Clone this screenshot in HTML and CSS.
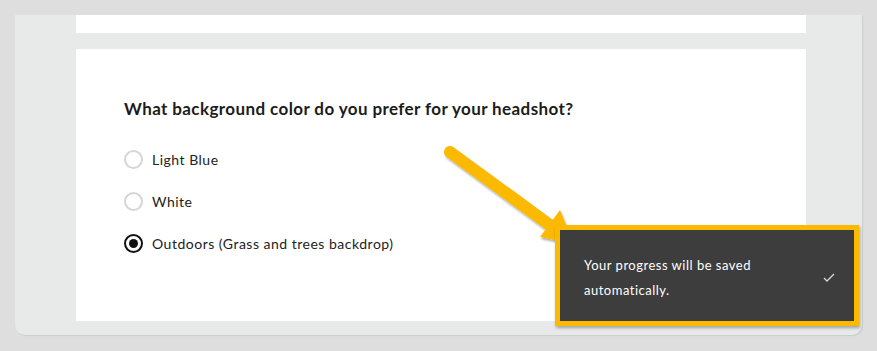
FILE: index.html
```html
<!DOCTYPE html>
<html lang="en">
<head>
    <meta charset="UTF-8">
    <meta name="viewport" content="width=device-width, initial-scale=1.0">
    <title>Headshot Survey</title>
    <link rel="stylesheet" href="styles.css">
</head>
<body>
    <div class="panel">
        <!-- Previous question (scrolled out) -->
        <div class="card card-top"></div>

        <!-- Question Card -->
        <div class="card card-question">
            <h2>What background color do you prefer for your headshot?</h2>
            <label class="option">
                <span class="radio"></span>
                <span>Light Blue</span>
            </label>
            <label class="option">
                <span class="radio"></span>
                <span>White</span>
            </label>
            <label class="option">
                <span class="radio checked"></span>
                <span>Outdoors (Grass and trees backdrop)</span>
            </label>
        </div>
    </div>

    <!-- Callout arrow -->
    <svg class="arrow" width="160" height="120" viewBox="0 0 160 120">
        <defs>
            <filter id="shade" x="-20%" y="-20%" width="140%" height="140%">
                <feDropShadow dx="1" dy="2" stdDeviation="1.2" flood-color="#000" flood-opacity="0.35"/>
            </filter>
        </defs>
        <g filter="url(#shade)">
            <line x1="10" y1="12" x2="118" y2="91" stroke="#fbb900" stroke-width="12" stroke-linecap="round"/>
            <polygon points="134,104 120,70 100,97" fill="#fbb900"/>
        </g>
    </svg>

    <!-- Toast -->
    <div class="toast">
        <p>Your progress will be saved automatically.</p>
        <svg class="check" width="12" height="9" viewBox="0 0 12 9">
            <path d="M1 5 L4 8 L11 1" fill="none" stroke="#d8d8d8" stroke-width="1.3"/>
        </svg>
    </div>
</body>
</html>
```

FILE: styles.css
```css
/* Base Styles */
body, html {
    margin: 0;
    padding: 0;
    font-family: 'Lato', 'Open Sans', sans-serif;
    background: #dedede;
    color: #1f1f1f;
    letter-spacing: 0.5px;
}

body {
    padding: 15px 15px 0 15px;
    height: 336px;
    overflow: hidden;
}

/* Panel */
.panel {
    width: 847px;
    box-sizing: border-box;
    padding: 0 56px 14px 61px;
    background: #e7eae9;
    border-radius: 0 0 10px 10px;
    box-shadow: 1px 1px 1px rgba(0, 0, 0, 0.08);
    display: flex;
    flex-direction: column;
    gap: 16px;
}

.card {
    background: #fff;
}

.card-top {
    height: 18px;
}

.card-question {
    height: 272px;
    box-sizing: border-box;
    padding: 49px 48px 0 48px;
}

.card-question h2 {
    margin: 0 0 19px 0;
    font-size: 17px;
    font-weight: 700;
    color: #1c1c1c;
    letter-spacing: 0.4px;
}

/* Options */
.option {
    display: flex;
    align-items: center;
    gap: 9px;
    height: 42px;
    font-size: 14px;
    color: #222;
}

.radio {
    width: 19px;
    height: 19px;
    box-sizing: border-box;
    border: 2px solid #d6d6d6;
    border-radius: 50%;
    display: flex;
    align-items: center;
    justify-content: center;
}

.radio.checked {
    border-color: #111;
}

.radio.checked::after {
    content: "";
    width: 9px;
    height: 9px;
    border-radius: 50%;
    background: #111;
}

/* Callout */
.arrow {
    position: absolute;
    left: 440px;
    top: 140px;
}

.toast {
    position: absolute;
    left: 555px;
    top: 225px;
    width: 304px;
    height: 101px;
    box-sizing: border-box;
    background: #3d3d3d;
    border: 5px solid #fbb900;
    box-shadow: 1px 2px 3px rgba(0, 0, 0, 0.3);
    display: flex;
    align-items: center;
    justify-content: space-between;
    padding: 4px 19px 0 24px;
}

.toast p {
    margin: 0;
    width: 200px;
    font-size: 13px;
    line-height: 25px;
    color: #fff;
}

.check {
    margin-top: -1px;
}
```
